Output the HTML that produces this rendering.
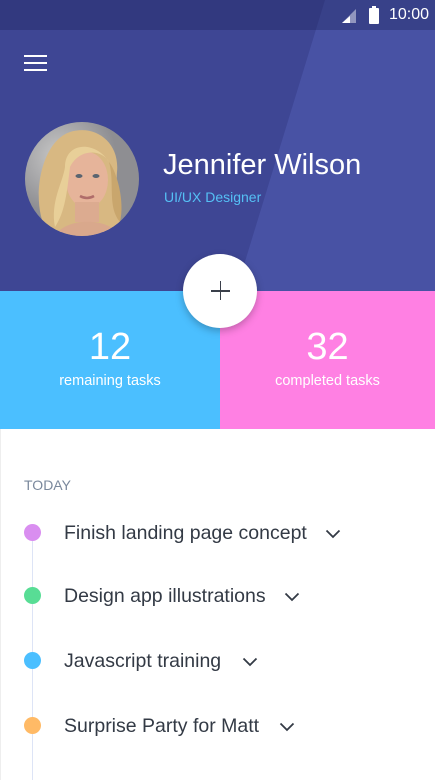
<!DOCTYPE html>
<html><head><meta charset="utf-8"><style>
*{margin:0;padding:0;box-sizing:border-box}
body{width:435px;height:780px;overflow:hidden;font-family:"Liberation Sans",sans-serif;background:#fff;position:relative}
.abs{position:absolute}
</style></head><body>
<div class="abs" style="left:0;top:0;width:435px;height:291px;background:#3e4694;overflow:hidden">
  <div class="abs" style="left:0;top:0;width:435px;height:291px;background:#4852a4;clip-path:polygon(325px 0,435px 0,435px 291px,236px 291px)"></div>
  <div class="abs" style="left:0;top:0;width:435px;height:30px;background:rgba(30,35,90,.35)"></div>
</div>
<svg class="abs" style="left:340px;top:8px" width="18" height="16"><polygon points="2,15 16,15 16,1" fill="#fff" opacity=".45"/><polygon points="2,15 10,15 10,8" fill="#fff"/></svg>
<div class="abs" style="left:369px;top:8px;width:10px;height:16px;background:#fff;border-radius:1px"></div>
<div class="abs" style="left:372px;top:6px;width:4px;height:3px;background:#fff"></div>
<div class="abs" style="left:389px;top:6px;color:#fff;font-size:16px">10:00</div>
<div class="abs" style="left:24px;top:55px;width:23px;height:2px;background:#fff;box-shadow:0 7px 0 #fff,0 14px 0 #fff"></div>
<svg class="abs" style="left:25px;top:122px" width="114" height="114" viewBox="0 0 114 114">
<defs><clipPath id="c"><circle cx="57" cy="57" r="57"/></clipPath>
<radialGradient id="bg" cx=".3" cy=".3"><stop offset="0" stop-color="#c8c8c8"/><stop offset="1" stop-color="#8e8e92"/></radialGradient></defs>
<g clip-path="url(#c)">
<rect width="114" height="114" fill="url(#bg)"/>
<path d="M22 110 C5 80 15 20 45 10 C70 2 95 20 92 50 C90 75 100 95 92 110 Z" fill="#d8b882"/>
<ellipse cx="62" cy="58" rx="21" ry="28" fill="#e6b49a"/>
<rect x="50" y="80" width="24" height="20" fill="#dcab90"/>
<path d="M30 114 C40 95 85 95 95 114Z" fill="#d9a88c"/>
<path d="M40 45 C40 20 70 18 84 40 C78 28 55 25 45 45 C42 70 40 90 30 105 C25 80 38 60 40 45Z" fill="#e8cf98"/>
<path d="M84 40 C90 60 82 85 95 100 C100 80 92 50 84 40Z" fill="#c9a66d"/>
<ellipse cx="54" cy="54" rx="3.5" ry="2" fill="#5a6470"/><ellipse cx="71" cy="54" rx="3.5" ry="2" fill="#5a6470"/>
<path d="M55 74 Q62 78 69 74" stroke="#b06d6a" stroke-width="2.5" fill="none"/>
</g></svg>
<div class="abs" style="left:163px;top:149px;color:#fff;font-size:29px;font-weight:300">Jennifer Wilson</div>
<div class="abs" style="left:164px;top:189px;color:#55c0f5;font-size:14px">UI/UX Designer</div>
<div class="abs" style="left:0;top:291px;width:220px;height:138px;background:#4bbfff;color:#fff;text-align:center">
  <div style="font-size:38px;font-weight:300;margin-top:36px;line-height:40px">12</div>
  <div style="font-size:14.5px;margin-top:6px">remaining tasks</div>
</div>
<div class="abs" style="left:220px;top:291px;width:215px;height:138px;background:#ff80e3;color:#fff;text-align:center">
  <div style="font-size:38px;font-weight:300;margin-top:36px;line-height:40px">32</div>
  <div style="font-size:14.5px;margin-top:6px">completed tasks</div>
</div>
<div class="abs" style="left:183px;top:254px;width:74px;height:74px;border-radius:50%;background:#fff;box-shadow:0 3px 8px rgba(0,0,0,.25)"></div>
<div class="abs" style="left:211px;top:290px;width:19px;height:1.6px;background:#3a3f4a"></div>
<div class="abs" style="left:219.7px;top:281px;width:1.6px;height:19px;background:#3a3f4a"></div>
<div class="abs" style="left:0;top:429px;width:1px;height:351px;background:#eee"></div>
<div class="abs" style="left:24px;top:477px;color:#7a889c;font-size:14px">TODAY</div>
<div class="abs" style="left:32px;top:533px;width:1px;height:247px;background:#dde4f6"></div>
<div class="abs" style="left:24px;top:524px;width:17px;height:17px;border-radius:50%;background:#d98ef0"></div>
<div class="abs" style="left:24px;top:587px;width:17px;height:17px;border-radius:50%;background:#58dd95"></div>
<div class="abs" style="left:24px;top:652px;width:17px;height:17px;border-radius:50%;background:#4bbfff"></div>
<div class="abs" style="left:24px;top:717px;width:17px;height:17px;border-radius:50%;background:#ffba66"></div>
<div class="abs" style="left:64px;top:522px;color:#333a45;font-size:19.5px">Finish landing page concept</div>
<div class="abs" style="left:64px;top:585px;color:#333a45;font-size:19.5px">Design app illustrations</div>
<div class="abs" style="left:64px;top:650px;color:#333a45;font-size:19.5px">Javascript training</div>
<div class="abs" style="left:64px;top:715px;color:#333a45;font-size:19.5px">Surprise Party for Matt</div>
<svg class="abs" style="left:325px;top:529px" width="16" height="10"><path d="M1.5 1.5 L8 8 L14.5 1.5" stroke="#333a45" stroke-width="1.8" fill="none"/></svg>
<svg class="abs" style="left:284px;top:592px" width="16" height="10"><path d="M1.5 1.5 L8 8 L14.5 1.5" stroke="#333a45" stroke-width="1.8" fill="none"/></svg>
<svg class="abs" style="left:242px;top:657px" width="16" height="10"><path d="M1.5 1.5 L8 8 L14.5 1.5" stroke="#333a45" stroke-width="1.8" fill="none"/></svg>
<svg class="abs" style="left:279px;top:722px" width="16" height="10"><path d="M1.5 1.5 L8 8 L14.5 1.5" stroke="#333a45" stroke-width="1.8" fill="none"/></svg>
</body></html>
